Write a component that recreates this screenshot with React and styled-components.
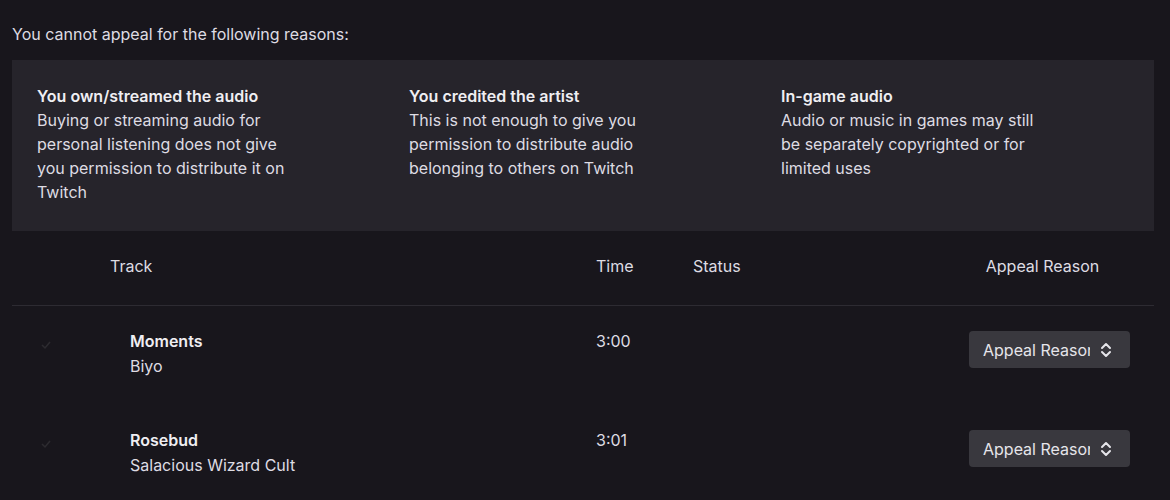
import React from "react";
import styled, { createGlobalStyle } from "styled-components";

const GlobalStyle = createGlobalStyle`
  html, body {
    margin: 0;
    background: #18161c;
  }
  body {
    font-family: Inter, "Noto Sans", sans-serif;
    color: #dedce3;
    font-size: 16px;
    line-height: 24px;
  }
`;

const Page = styled.div`
  padding: 22px 16px 0 12px;
  height: 500px;
  box-sizing: border-box;
  overflow: hidden;
`;

const Intro = styled.p`
  margin: 0 0 14px;
`;

const ReasonPanel = styled.div`
  background: #26242b;
  padding: 24px 25px 27px;
  display: grid;
  grid-template-columns: repeat(3, 372px);
`;

const Reason = styled.div`
  max-width: 262px;
`;

const ReasonTitle = styled.div`
  font-weight: 600;
  color: #efeef2;
`;

const Grid = styled.div`
  display: grid;
  grid-template-columns: 98px 486px 97px 1fr 209px;
  align-items: start;
`;

const HeadRow = styled(Grid)`
  padding: 23px 0 27px;
  border-bottom: 1px solid #2d2b32;
`;

const Row = styled(Grid)`
  height: 99px;
  padding-top: 23px;
  box-sizing: border-box;
`;

const HeadCell = styled.div`
  text-align: ${(p) => (p.$center ? "center" : "left")};
  padding-right: ${(p) => (p.$center ? "14px" : "0")};
`;

const Mark = styled.div`
  padding: 4px 0 0 28px;
  opacity: 0.18;
`;

const TrackCell = styled.div`
  padding-left: 20px;
`;

const TrackTitle = styled.div`
  font-weight: 600;
  color: #efeef2;
  line-height: 25px;
`;

const SelectWrap = styled.div`
  display: flex;
  justify-content: center;
  padding-top: 2px;
`;

const Select = styled.button`
  width: 161px;
  height: 37px;
  background: #39383e;
  border: none;
  border-radius: 4px;
  color: #e6e5ea;
  font: inherit;
  display: flex;
  align-items: center;
  padding: 0 0 0 14px;
  cursor: pointer;
`;

const SelectLabel = styled.span`
  width: 107px;
  overflow: hidden;
  white-space: nowrap;
  text-align: left;
`;

const Chevrons = () => (
  <svg width="14" height="18" viewBox="0 0 14 18" style={{ marginLeft: 9 }}>
    <path
      d="M3 7l4-4 4 4M3 11l4 4 4-4"
      fill="none"
      stroke="#e6e5ea"
      strokeWidth="2"
      strokeLinecap="round"
      strokeLinejoin="round"
    />
  </svg>
);

const Check = () => (
  <svg width="12" height="12" viewBox="0 0 12 12">
    <path d="M2 6l3 3 5-6" fill="none" stroke="#888" strokeWidth="1.5" />
  </svg>
);

const reasons = [
  {
    title: "You own/streamed the audio",
    text: "Buying or streaming audio for personal listening does not give you permission to distribute it on Twitch",
  },
  {
    title: "You credited the artist",
    text: "This is not enough to give you permission to distribute audio belonging to others on Twitch",
  },
  {
    title: "In-game audio",
    text: "Audio or music in games may still be separately copyrighted or for limited uses",
  },
];

const tracks = [
  { title: "Moments", artist: "Biyo", time: "3:00" },
  { title: "Rosebud", artist: "Salacious Wizard Cult", time: "3:01" },
];

export default function App() {
  return (
    <>
      <GlobalStyle />
      <Page>
        <Intro>You cannot appeal for the following reasons:</Intro>
        <ReasonPanel>
          {reasons.map((r) => (
            <Reason key={r.title}>
              <ReasonTitle>{r.title}</ReasonTitle>
              {r.text}
            </Reason>
          ))}
        </ReasonPanel>

        <HeadRow>
          <div />
          <HeadCell>Track</HeadCell>
          <HeadCell>Time</HeadCell>
          <HeadCell>Status</HeadCell>
          <HeadCell $center>Appeal Reason</HeadCell>
        </HeadRow>

        {tracks.map((t) => (
          <Row key={t.title}>
            <Mark>
              <Check />
            </Mark>
            <TrackCell>
              <TrackTitle>{t.title}</TrackTitle>
              {t.artist}
            </TrackCell>
            <div>{t.time}</div>
            <div />
            <SelectWrap>
              <Select>
                <SelectLabel>Appeal Reason</SelectLabel>
                <Chevrons />
              </Select>
            </SelectWrap>
          </Row>
        ))}
      </Page>
    </>
  );
}
